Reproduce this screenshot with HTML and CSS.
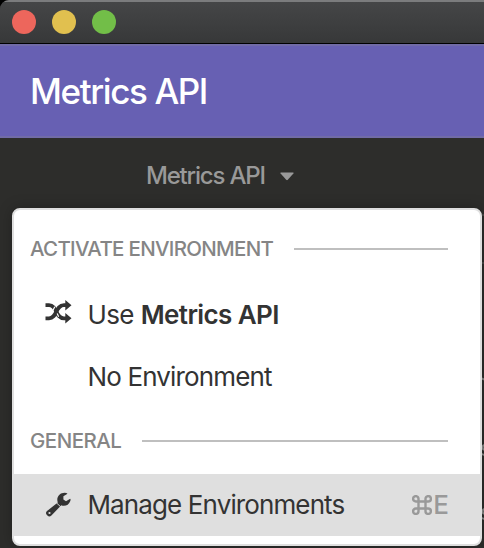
FILE: index.html
```html
<!DOCTYPE html>
<html lang="en">
<head>
<meta charset="utf-8">
<title>Metrics API</title>
<link rel="stylesheet" href="styles.css">
</head>
<body>
<div class="window">
  <div class="titlebar">
    <span class="light light-close"></span>
    <span class="light light-minimize"></span>
    <span class="light light-zoom"></span>
  </div>
  <header class="header"><h1 class="title">Metrics API</h1></header>
  <main class="workspace">
    <div class="environment">
      <span class="environment-name">Metrics API</span>
      <svg class="caret" width="14" height="9" viewBox="0 0 14 9"><path d="M1 .5h12q1 0 .4.9L7.800 7.800q-.8.8-1.600 0L.6 1.400Q0 .5 1 .5z"/></svg>
    </div>
  </main>
  <span class="rule rule-first"></span>
  <span class="rule rule-second"></span>
  <svg class="edge" width="2" height="190" viewBox="0 0 2 190"><path d="M0 20.500l2 1M2 87q-2 1-1 4l1 1M0 96l2 1M2 151q-2 1-1 4l1 1M0 160l2 1"/></svg>
  <div class="menu">
    <div class="section section-activate"><span class="section-name activate-name">ACTIVATE ENVIRONMENT</span></div>
    <div class="item">
      <svg class="icon icon-shuffle" width="28" height="24" viewBox="0 0 28 24">
        <path class="stroke" d="M1.500 5.200H5C13.500 5.200 11 18.300 20 18.300H22"/>
        <path class="stroke" d="M1.500 18.300H5C13.500 18.300 11 5.200 20 5.200H22"/>
        <path class="gap" d="M10.800 6.800L8.600 11M14.600 16.800L13.200 13.600"/>
        <path d="M21.300 0L27.500 5.200L21.300 10.400zM21.300 13.100L27.500 18.300L21.300 23.500z"/>
      </svg>
      <span class="label use-label">Use <strong>Metrics API</strong></span>
    </div>
    <div class="item"><span class="icon"></span><span class="label">No Environment</span></div>
    <div class="section"><span class="section-name general-name">GENERAL</span></div>
    <div class="item item-active">
      <svg class="icon" width="28" height="26" viewBox="0 0 28 26">
        <path fill-rule="evenodd" d="M13.800 10.600C11.800 5 16 .8 20.500 .8Q22.700 .9 23.500 1.700L19.400 4.200V7.600L22 9.200L26.200 6.700Q26.900 7.300 26.300 9C24.900 13.300 20.500 14.800 17.300 13.300L7.400 23.500Q5.400 25.500 3.400 23.600L2.900 23Q1 21 3 19zM5.500 19.900A1.100 1.100 0 1 0 5.500 22.100A1.100 1.100 0 1 0 5.500 19.900z"/>
        <path class="wrench-seam" d="M12.200 10.600L17.200 15.300"/>
      </svg>
      <span class="label manage-label">Manage Environments</span>
      <span class="shortcut"><svg width="20" height="20" viewBox="0 0 20 20"><path d="M6.500 6.500V3.800A2.700 2.700 0 1 0 3.800 6.500H16.200A2.700 2.700 0 1 0 13.500 3.800V16.200A2.700 2.700 0 1 0 16.200 13.500H3.800A2.700 2.700 0 1 0 6.500 16.200z"/></svg>E</span>
    </div>
  </div>
</div>
</body>
</html>
```
FILE: styles.css
```css
* { box-sizing: border-box; }
body { margin: 0; background: #000; font-family: Inter, sans-serif; }
.window {
  position: relative;
  width: 484px;
  height: 548px;
  overflow: hidden;
  display: flex;
  flex-direction: column;
  background: #2d2d2b;
  border-top-left-radius: 9px;
}
.titlebar {
  height: 44px;
  padding: 0 12px 1px;
  display: flex;
  align-items: center;
  gap: 16px;
  background: linear-gradient(#454647, #373839);
  border-top: 2px solid #7b7c7d;
  border-bottom: 1px solid #000;
}
.light { width: 24px; height: 24px; border-radius: 50%; }
.light-close { background: #ed665c; }
.light-minimize { background: #e1c04f; }
.light-zoom { background: #72be48; }
.header {
  height: 94px;
  padding: 0 30px;
  display: flex;
  align-items: center;
  background: #6760b3;
  border-top: 2px solid #716ba7;
  border-bottom: 2px solid #716ba7;
}
.title {
  margin: 0;
  color: #fff;
  font-size: 35px;
  font-weight: 500;
  line-height: 40px;
  letter-spacing: -1.4px;
}
.workspace { flex: 1; padding: 22px 0 0 146px; }
.environment { height: 32px; display: flex; align-items: center; gap: 15px; color: #999; }
.environment-name { margin-bottom: 1px; font-size: 24px; font-weight: 450; letter-spacing: -1.2px; }
.caret { fill: #999; }
.rule { position: absolute; right: 0; width: 2px; height: 2px; background: #464644; }
.rule-first { top: 214px; }
.rule-second { top: 262px; }
.edge { position: absolute; right: 0; top: 358px; fill: none; stroke: #8a8a88; stroke-width: 2; }
.menu {
  position: absolute;
  left: 12px;
  top: 208px;
  width: 470px;
  height: 338px;
  padding-top: 6px;
  background: #fff;
  border: 2px solid #dfdfdf;
  border-radius: 8px;
  box-shadow: 0 0 14px rgba(0, 0, 0, 0.25);
}
.section {
  height: 66px;
  padding: 0 32px 0 16px;
  display: flex;
  align-items: center;
  gap: 21px;
}
.section-activate { height: 68px; padding-bottom: 2px; }
.section::after { content: ""; flex: 1; height: 2px; background: #bfbfbf; }
.section-name { color: #858585; font-size: 20.5px; font-weight: 450; line-height: 24px; white-space: nowrap; }
.activate-name { letter-spacing: -0.7px; }
.general-name { letter-spacing: -0.5px; }
.item {
  height: 62px;
  padding: 0 32px 0 30px;
  display: flex;
  align-items: center;
  color: #333;
  font-size: 26px;
}
.item-active { background: #dfdfdf; }
.icon { width: 28px; margin-right: 15.5px; flex: none; fill: #333; }
.icon-shuffle { margin-bottom: 6px; }
.wrench-seam { stroke: #dfdfdf; stroke-width: 0.9; }
.stroke { fill: none; stroke: #333; stroke-width: 3.8; }
.gap { fill: none; stroke: #fff; stroke-width: 1.2; }
.label { margin-bottom: 1px; white-space: nowrap; font-weight: 420; letter-spacing: -0.85px; }
.manage-label { letter-spacing: -0.88px; }
.use-label { letter-spacing: -0.6px; }
.label strong { font-weight: 600; }
.shortcut { margin: 0 -1px 1px auto; display: flex; align-items: center; gap: 1px; color: #999; font-weight: 500; }
.shortcut svg { fill: none; stroke: #999; stroke-width: 2.400; }
```
